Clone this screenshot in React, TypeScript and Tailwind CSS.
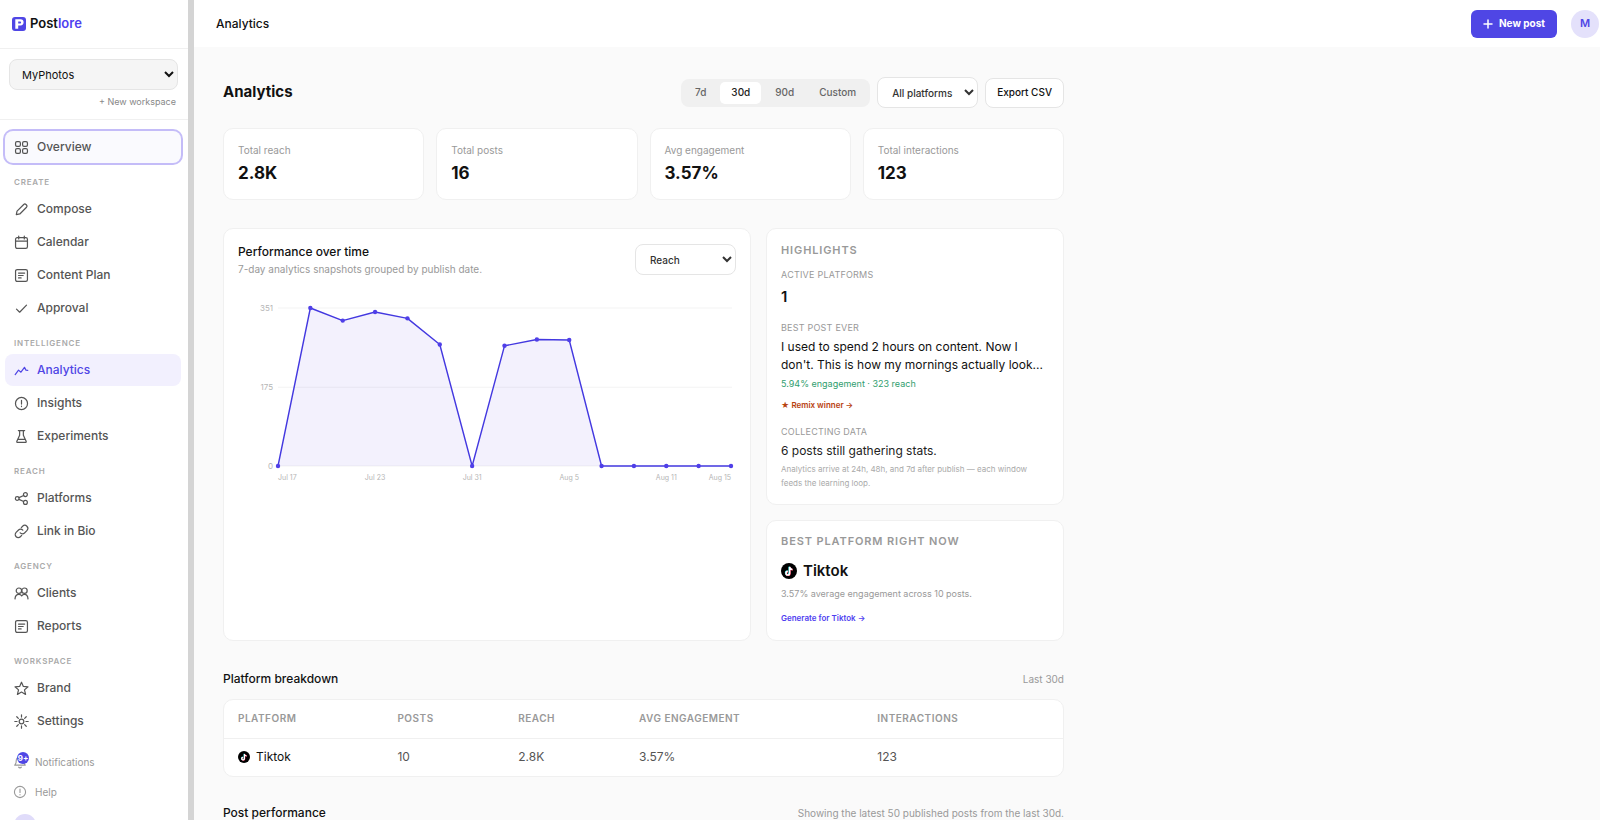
import type { ReactNode } from "react"
import clsx from "clsx"

const ICONS: Record<string, ReactNode> = {
  overview: (
    <>
      <rect x="1.6" y="1.6" width="5.2" height="5.2" rx="1.5" />
      <rect x="9.2" y="1.6" width="5.2" height="5.2" rx="1.5" />
      <rect x="1.6" y="9.2" width="5.2" height="5.2" rx="1.5" />
      <rect x="9.2" y="9.2" width="5.2" height="5.2" rx="1.5" />
    </>
  ),
  compose: <path d="M10.4 2.6a1.7 1.7 0 0 1 2.4 0l.6.6a1.7 1.7 0 0 1 0 2.4L6.2 12.8l-3.8.8.8-3.8z" />,
  calendar: (
    <>
      <rect x="1.6" y="2.8" width="12.8" height="11.6" rx="1.8" />
      <path d="M1.6 6.6h12.8M5 1v3.2M11 1v3.2" />
    </>
  ),
  doc: (
    <>
      <rect x="1.6" y="1.6" width="12.8" height="12.8" rx="1.8" />
      <path d="M4.8 5.4h6.6M4.8 8h5M4.8 10.6h2.8" />
    </>
  ),
  check: <path d="M2.6 8.6l3.4 3.4 7.4-7.6" />,
  analytics: <path d="M1.2 12.4l3.6-4.8 2.6 2.2 3.8-5.2 1.6 3 2 .2" />,
  info: (
    <>
      <circle cx="8" cy="8" r="6.5" />
      <path d="M8 4.6v4M8 10.9v.4" />
    </>
  ),
  flask: <path d="M4.6 1.6h6.8M6 1.6v5L3 13.2c-.3.7.1 1.2.8 1.2h8.4c.7 0 1.1-.5.8-1.2l-3-6.6v-5M4.4 11h7.2" />,
  share: (
    <>
      <circle cx="3.4" cy="8" r="2" />
      <circle cx="12.2" cy="3.8" r="2.1" />
      <circle cx="12.2" cy="12.2" r="2.1" />
      <path d="M5.3 7.1l5-2.4M5.3 8.9l5 2.4" />
    </>
  ),
  link: (
    <>
      <path d="M6.6 9.4a3.2 3.2 0 0 0 4.6.2l2.6-2.6a3.2 3.2 0 0 0-4.6-4.6L7.8 3.8" />
      <path d="M9.4 6.6a3.2 3.2 0 0 0-4.6-.2L2.2 9a3.2 3.2 0 0 0 4.6 4.6l1.4-1.4" />
    </>
  ),
  clients: (
    <>
      <circle cx="5.2" cy="5" r="2.9" />
      <circle cx="11.2" cy="5" r="2.9" />
      <path d="M1 13.8c.2-3 1.6-4.8 4.2-4.8 1.4 0 2.4.6 3 1.6.6-1 1.6-1.6 3-1.6 2.4 0 3.6 1.8 3.8 4.8" />
    </>
  ),
  star: <path d="M8 1.2l2 4.6 5 .4-3.8 3.3 1.2 4.9L8 11.8l-4.4 2.6 1.2-4.9L1 6.2l5-.4z" />,
  settings: (
    <>
      <circle cx="8" cy="8" r="2.5" />
      <path d="M8 .8v2.4M8 12.8v2.4M.8 8h2.4M12.8 8h2.4M2.9 2.9l1.7 1.7M11.4 11.4l1.7 1.7M2.9 13.1l1.7-1.7M11.4 4.6l1.7-1.7" />
    </>
  ),
  bell: <path d="M8 1.8a4.4 4.4 0 0 0-4.4 4.4c0 4-1.8 5.4-1.8 5.4h12.4s-1.8-1.4-1.8-5.4A4.4 4.4 0 0 0 8 1.8M6.4 14a1.9 1.9 0 0 0 3.2 0" />,
}

function Icon({ name, className }: { name: string; className?: string }) {
  return (
    <svg
      viewBox="1 1 14 14"
      fill="none"
      stroke="currentColor"
      strokeWidth="1.3"
      strokeLinecap="round"
      strokeLinejoin="round"
      className={clsx("shrink-0 overflow-visible", className)}
      aria-hidden="true"
    >
      {ICONS[name]}
    </svg>
  )
}

function TiktokIcon({ className }: { className?: string }) {
  return (
    <svg viewBox="0 0 24 24" className={clsx("shrink-0", className)} aria-hidden="true">
      <circle cx="12" cy="12" r="12" fill="#000" />
      <g fill="none" strokeWidth="2.3">
        <path d="M12.3 5.5v9.3a2.7 2.7 0 1 1-2.7-2.7M12.3 5.5c.3 2.4 1.9 3.8 4.2 4" stroke="#25f4ee" />
        <path d="M13.5 6.3v9.3a2.7 2.7 0 1 1-2.7-2.7M13.5 6.3c.3 2.4 1.9 3.8 4.2 4" stroke="#fe2c55" />
        <path d="M12.9 5.9v9.3a2.7 2.7 0 1 1-2.7-2.7M12.9 5.9c.3 2.4 1.9 3.8 4.2 4" stroke="#fff" />
      </g>
    </svg>
  )
}

const NAV = [
  {
    title: "Create",
    items: [
      { label: "Compose", icon: "compose" },
      { label: "Calendar", icon: "calendar" },
      { label: "Content Plan", icon: "doc" },
      { label: "Approval", icon: "check" },
    ],
  },
  {
    title: "Intelligence",
    items: [
      { label: "Analytics", icon: "analytics", active: true },
      { label: "Insights", icon: "info" },
      { label: "Experiments", icon: "flask" },
    ],
  },
  {
    title: "Reach",
    items: [
      { label: "Platforms", icon: "share" },
      { label: "Link in Bio", icon: "link" },
    ],
  },
  {
    title: "Agency",
    items: [
      { label: "Clients", icon: "clients" },
      { label: "Reports", icon: "doc" },
    ],
  },
  {
    title: "Workspace",
    items: [
      { label: "Brand", icon: "star" },
      { label: "Settings", icon: "settings" },
    ],
  },
]

const STATS = [
  { label: "Total reach", value: "2.8K" },
  { label: "Total posts", value: "16" },
  { label: "Avg engagement", value: "3.57%" },
  { label: "Total interactions", value: "123" },
]

const REACH = [0, 351, 323, 342, 328, 270, 0, 267, 281, 280, 0, 0, 0, 0, 0]
const MAX = 351
const X_LABELS = [
  { i: 0, text: "Jul 17", anchor: "start" },
  { i: 3, text: "Jul 23", anchor: "middle" },
  { i: 6, text: "Jul 31", anchor: "middle" },
  { i: 9, text: "Aug 5", anchor: "middle" },
  { i: 12, text: "Aug 11", anchor: "middle" },
  { i: 14, text: "Aug 15", anchor: "end" },
] as const

const px = (i: number) => 40 + (i * 453) / (REACH.length - 1)
const py = (v: number) => 176 - (v / MAX) * 158

function Chart() {
  const line = REACH.map((v, i) => `${px(i)},${py(v)}`).join(" ")
  return (
    <svg viewBox="0 0 498 200" className="mt-3 w-full" role="img" aria-label="Reach over time">
      {[351, 175, 0].map((v) => (
        <g key={v}>
          <line x1="40" x2="494" y1={py(v)} y2={py(v)} stroke="#f3f3f3" />
          <text x="35" y={py(v) + 3} textAnchor="end" fontSize="8" fill="#b5b5b5">
            {v}
          </text>
        </g>
      ))}
      <polygon points={`${px(0)},${py(0)} ${line} ${px(14)},${py(0)}`} fill="#4f3fe8" fillOpacity="0.07" />
      <polyline points={line} fill="none" stroke="#4338e0" strokeWidth="1.4" strokeLinejoin="round" />
      {REACH.map((v, i) => (
        <circle key={i} cx={px(i)} cy={py(v)} r="2.2" fill="#4f3fe8" />
      ))}
      {X_LABELS.map((l) => (
        <text key={l.text} x={px(l.i)} y="190" textAnchor={l.anchor} fontSize="7" fill="#b5b5b5">
          {l.text}
        </text>
      ))}
    </svg>
  )
}

function NavLink({ label, icon, active, focused }: { label: string; icon: string; active?: boolean; focused?: boolean }) {
  return (
    <a
      href="#"
      className={clsx(
        "flex h-8 items-center gap-[9px] rounded-lg px-2.5 text-xs font-medium",
        active && "bg-[#f2f0fe] text-[#4f46e5]",
        focused && "bg-[#fafafe] text-[#555] ring-2 ring-[#c4bcf8]",
        !active && !focused && "text-[#555]"
      )}
    >
      <Icon name={icon} className="size-[13px]" />
      {label}
    </a>
  )
}

function Sidebar() {
  return (
    <aside className="flex w-[194px] shrink-0 flex-col overflow-hidden border-r-[6px] border-[#d4d4d4] bg-white">
      <div className="flex h-[49px] shrink-0 items-center gap-1 border-b border-[#f0f0f0] px-3">
        <svg viewBox="0 0 14 14" className="size-3.5" aria-hidden="true">
          <rect width="14" height="14" rx="3" fill="#4f46e5" />
          <path d="M3.3 11.8V2.2h5.2a3 3 0 0 1 0 6.2H6.2v3.4z" fill="#fff" />
          <path d="M6.2 4.6h2a.9.9 0 0 1 0 1.8h-2z" fill="#4f46e5" />
        </svg>
        <span className="text-[13px] font-semibold text-[#111]">
          Post<span className="text-[#4f3ff0]">lore</span>
        </span>
      </div>

      <div className="flex shrink-0 flex-col items-end gap-1 border-b border-[#f0f0f0] pt-2.5 pr-2.5 pb-[9px] pl-[9px]">
        <select
          aria-label="Workspace"
          className="h-[31px] w-full rounded-lg border border-[#e5e5e5] bg-[#f5f5f5] px-2 text-[11px] text-[#111]"
        >
          <option>MyPhotos</option>
        </select>
        <button className="px-0.5 text-[9px] leading-4 text-[#888]">+ New workspace</button>
      </div>

      <nav className="flex shrink-0 flex-col gap-px pt-[11px] pr-[7px] pl-[5px]">
        <NavLink label="Overview" icon="overview" focused />
        {NAV.map((group) => (
          <div key={group.title} className="flex flex-col gap-px">
            <h2 className="px-[9px] pt-2.5 pb-0.5 text-[8px] leading-4 font-semibold tracking-widest text-[#aaa] uppercase">
              {group.title}
            </h2>
            {group.items.map((item) => (
              <NavLink key={item.label} {...item} />
            ))}
          </div>
        ))}
      </nav>

      <div className="mt-[11px] flex shrink-0 flex-col gap-0.5 px-3.5 text-[10px] text-[#999]">
        <a href="#" className="flex h-7 items-center gap-[9px]">
          <span className="relative">
            <Icon name="bell" className="size-3" />
            <span className="absolute -top-1 left-[3px] flex size-3 items-center justify-center rounded-full bg-[#4f46e5] text-[8px] font-bold text-white">
              9+
            </span>
          </span>
          Notifications
        </a>
        <a href="#" className="flex h-7 items-center gap-[9px]">
          <Icon name="info" className="size-3" />
          Help
        </a>
        <span className="mt-1.5 size-[22px] rounded-full bg-[#e0dcfa]" />
      </div>
    </aside>
  )
}

function Card({ children, className }: { children: ReactNode; className?: string }) {
  return <div className={clsx("rounded-[10px] border border-[#f0f0f0] bg-white p-3.5", className)}>{children}</div>
}

const eyebrow = "text-[11px] leading-3 font-semibold tracking-[0.08em] text-[#999] uppercase"
const fieldLabel = "text-[9px] leading-3 tracking-wide text-[#999] uppercase"
const selectStyle = "h-[31px] rounded-lg border border-[#e5e5e5] bg-white pl-2.5 text-[10px] font-medium text-[#333]"

export default function App() {
  return (
    <div className="flex h-screen overflow-hidden bg-[#fafafa] font-['Inter',sans-serif] text-[#111]">
      <Sidebar />
      <div className="flex min-w-0 flex-1 flex-col">
        <header className="flex h-[47px] shrink-0 items-center gap-3.5 bg-white pr-px pl-[22px]">
          <span className="flex-1 text-xs font-medium">Analytics</span>
          <button className="flex h-7 items-center gap-1.5 rounded-md bg-[#4f46e5] px-3 text-[10px] font-bold text-white">
            <svg viewBox="0 0 10 10" className="size-2.5" aria-hidden="true">
              <path d="M5 1v8M1 5h8" stroke="currentColor" strokeWidth="1.5" strokeLinecap="round" />
            </svg>
            New post
          </button>
          <button className="size-7 rounded-full bg-[#e4e1fb] text-[11px] font-semibold text-[#4f46e5]">M</button>
        </header>

        <main className="flex-1 overflow-hidden px-[29px] pt-[30px]">
          <div className="max-w-[841px]">
            <div className="flex items-center justify-between">
              <h1 className="text-[15px] font-bold">Analytics</h1>
              <div className="flex items-center gap-[7px]">
                <div className="flex h-7 items-center gap-[3px] rounded-lg bg-[#f0f0f0] p-[3px] text-[10px] font-medium text-[#666]">
                  <button className="h-full px-[11px]">7d</button>
                  <button className="h-full rounded-[5px] bg-white px-[11px] text-[#222]">30d</button>
                  <button className="h-full px-[11px]">90d</button>
                  <button className="h-full px-[11px]">Custom</button>
                </div>
                <select aria-label="Platform" className={clsx(selectStyle, "w-[101px]")}>
                  <option>All platforms</option>
                </select>
                <button className="h-[30px] rounded-lg border border-[#e5e5e5] bg-white px-[11px] text-[10px] font-medium">
                  Export CSV
                </button>
              </div>
            </div>

            <div className="mt-5 grid grid-cols-4 gap-3">
              {STATS.map((s) => (
                <Card key={s.label}>
                  <p className="text-[10px] leading-[14px] text-[#999]">{s.label}</p>
                  <p className="mt-1 text-[17px] leading-6 font-bold">{s.value}</p>
                </Card>
              ))}
            </div>

            <div className="mt-7 flex gap-[15px]">
              <Card className="min-w-0 flex-1">
                <div className="flex items-start justify-between pt-px">
                  <div>
                    <h2 className="text-xs leading-4 font-medium">Performance over time</h2>
                    <p className="text-[10px] leading-[18px] text-[#999]">
                      7-day analytics snapshots grouped by publish date.
                    </p>
                  </div>
                  <select aria-label="Metric" className={clsx(selectStyle, "w-[101px]")}>
                    <option>Reach</option>
                  </select>
                </div>
                <Chart />
              </Card>

              <div className="flex w-[298px] shrink-0 flex-col gap-[15px]">
                <Card className="pt-[15px]">
                  <h2 className={eyebrow}>Highlights</h2>
                  <p className={clsx(fieldLabel, "mt-[13px]")}>Active platforms</p>
                  <p className="mt-1 text-[15px] leading-6 font-semibold">1</p>
                  <p className={clsx(fieldLabel, "mt-[13px]")}>Best post ever</p>
                  <p className="mt-1 text-xs leading-[18px]">
                    I used to spend 2 hours on content. Now I don't. This is how my mornings actually look...
                  </p>
                  <p className="mt-0.5 text-[9px] leading-4 text-[#2f9e6e]">5.94% engagement · 323 reach</p>
                  <a href="#" className="mt-[5px] block text-[8px] leading-4 font-semibold text-[#b8420f]">
                    ★ Remix winner →
                  </a>
                  <p className={clsx(fieldLabel, "mt-[13px]")}>Collecting data</p>
                  <p className="mt-1 text-xs leading-[18px] text-[#222]">6 posts still gathering stats.</p>
                  <p className="mt-0.5 text-[8px] leading-[14px] text-[#aaa]">
                    Analytics arrive at 24h, 48h, and 7d after publish — each window feeds the learning loop.
                  </p>
                </Card>
                <Card>
                  <h2 className={eyebrow}>Best platform right now</h2>
                  <p className="mt-3 flex items-center gap-1.5 text-[15px] leading-6 font-semibold">
                    <TiktokIcon className="size-4" />
                    Tiktok
                  </p>
                  <p className="mt-[3px] text-[9px] leading-4 text-[#999]">3.57% average engagement across 10 posts.</p>
                  <a href="#" className="mt-2 block text-[8px] leading-4 font-semibold text-[#4f3ff0]">
                    Generate for Tiktok →
                  </a>
                </Card>
              </div>
            </div>

            <div className="mt-7 flex items-center justify-between">
              <h2 className="text-xs leading-5 font-medium">Platform breakdown</h2>
              <span className="text-[10px] text-[#999]">Last 30d</span>
            </div>
            <div className="mt-2.5 overflow-hidden rounded-[10px] border border-[#f0f0f0] bg-white">
              <table className="w-full text-left text-xs">
                <thead className="text-[10px] tracking-wider text-[#999] uppercase">
                  <tr className="h-[38px] border-b border-[#f0f0f0]">
                    <th className="w-[19%] pl-3.5 font-semibold">Platform</th>
                    <th className="w-[14.4%] pl-3.5 font-semibold">Posts</th>
                    <th className="w-[14.4%] pl-3.5 font-semibold">Reach</th>
                    <th className="w-[28.4%] pl-3.5 font-semibold">Avg engagement</th>
                    <th className="pl-3.5 font-semibold">Interactions</th>
                  </tr>
                </thead>
                <tbody className="text-[#555]">
                  <tr className="h-[38px]">
                    <td className="pl-3.5">
                      <span className="flex items-center gap-1.5 text-[#111]">
                        <TiktokIcon className="size-3" />
                        Tiktok
                      </span>
                    </td>
                    <td className="pl-3.5">10</td>
                    <td className="pl-3.5">2.8K</td>
                    <td className="pl-3.5">3.57%</td>
                    <td className="pl-3.5">123</td>
                  </tr>
                </tbody>
              </table>
            </div>

            <div className="mt-[26px] flex items-center justify-between">
              <h2 className="text-xs leading-5 font-medium">Post performance</h2>
              <span className="text-[10px] text-[#999]">Showing the latest 50 published posts from the last 30d.</span>
            </div>
          </div>
        </main>
      </div>
    </div>
  )
}
